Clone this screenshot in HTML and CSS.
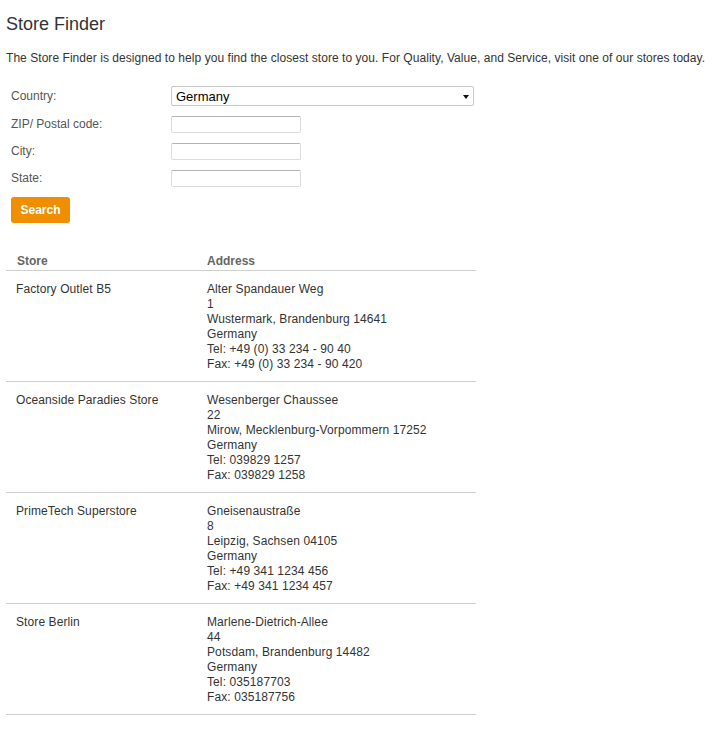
FILE: index.html
```html
<!DOCTYPE html>
<html lang="en">
<head>
<meta charset="utf-8">
<title>Store Finder</title>
<link rel="stylesheet" href="styles.css">
</head>
<body>
<div class="page">
  <h1 class="title">Store Finder</h1>
  <p class="intro">The Store Finder is designed to help you find the closest store to you. For Quality, Value, and Service, visit one of our stores today.</p>

  <form class="finder">
    <div class="row">
      <label class="label">Country:</label>
      <div class="select-wrap">
        <select class="select"><option>Germany</option></select>
      </div>
    </div>
    <div class="row">
      <label class="label">ZIP/ Postal code:</label>
      <input class="input" type="text">
    </div>
    <div class="row">
      <label class="label">City:</label>
      <input class="input" type="text">
    </div>
    <div class="row">
      <label class="label">State:</label>
      <input class="input" type="text">
    </div>
    <div class="actions">
      <button type="button" class="btn">Search</button>
    </div>
  </form>

  <table class="stores">
    <thead>
      <tr><th class="col-store">Store</th><th>Address</th></tr>
    </thead>
    <tbody>
      <tr>
        <td>Factory Outlet B5</td>
        <td>Alter Spandauer Weg<br>1<br>Wustermark, Brandenburg 14641<br>Germany<br>Tel: +49 (0) 33 234 - 90 40<br>Fax: +49 (0) 33 234 - 90 420</td>
      </tr>
      <tr>
        <td>Oceanside Paradies Store</td>
        <td>Wesenberger Chaussee<br>22<br>Mirow, Mecklenburg-Vorpommern 17252<br>Germany<br>Tel: 039829 1257<br>Fax: 039829 1258</td>
      </tr>
      <tr>
        <td>PrimeTech Superstore</td>
        <td>Gneisenaustraße<br>8<br>Leipzig, Sachsen 04105<br>Germany<br>Tel: +49 341 1234 456<br>Fax: +49 341 1234 457</td>
      </tr>
      <tr>
        <td>Store Berlin</td>
        <td>Marlene-Dietrich-Allee<br>44<br>Potsdam, Brandenburg 14482<br>Germany<br>Tel: 035187703<br>Fax: 035187756</td>
      </tr>
    </tbody>
  </table>
</div>
</body>
</html>
```

FILE: styles.css
```css
html, body {
  margin: 0;
  padding: 0;
  background: #fff;
}

body {
  font-family: "Liberation Sans", Arial, sans-serif;
  font-size: 12px;
  color: #333;
}

.page {
  padding: 13px 0 0 6px;
}

.title {
  margin: 0;
  font-size: 18px;
  line-height: 22px;
  font-weight: normal;
  color: #333;
}

.intro {
  margin: 16px 0 0;
  line-height: 15px;
  color: #333;
  white-space: nowrap;
  letter-spacing: 0.05px;
}

.finder {
  margin: 20px 0 0 5px;
  display: flex;
  flex-direction: column;
  gap: 10px;
}

.row {
  display: flex;
  align-items: center;
}

.label {
  width: 160px;
  color: #555;
  line-height: 15px;
}

.select-wrap {
  position: relative;
  width: 303px;
  height: 20px;
}

.select-wrap::after {
  content: "";
  position: absolute;
  right: 5px;
  top: 9px;
  border-left: 3px solid transparent;
  border-right: 3px solid transparent;
  border-top: 4px solid #111;
  pointer-events: none;
}

.select {
  appearance: none;
  -webkit-appearance: none;
  box-sizing: border-box;
  width: 100%;
  height: 20px;
  margin: 0;
  padding: 0 0 0 4px;
  border: 1px solid #c8c8c8;
  border-radius: 2px;
  background: #fff;
  font-family: "Liberation Sans", Arial, sans-serif;
  font-size: 13px;
  color: #000;
}

.input {
  box-sizing: border-box;
  width: 130px;
  height: 17px;
  margin: 0;
  padding: 0 3px;
  border: 1px solid #dcdcdc;
  border-top-color: #b4b4b4;
  border-radius: 2px;
  background: #fff;
  font-family: "Liberation Sans", Arial, sans-serif;
  font-size: 12px;
}

.actions {
  display: flex;
}

.btn {
  width: 59px;
  height: 26px;
  margin: 0;
  padding: 0;
  border: none;
  border-radius: 3px;
  background: #ef8f00;
  color: #fff;
  font-family: "Liberation Sans", Arial, sans-serif;
  font-size: 12px;
  font-weight: bold;
  cursor: pointer;
}

.stores {
  margin-top: 31px;
  width: 470px;
  border-collapse: collapse;
}

.stores th {
  text-align: left;
  font-weight: bold;
  color: #666;
  line-height: 15px;
  padding: 0 10px 1px 11px;
  border-bottom: 1px solid #cfcfcf;
}

.stores th.col-store {
  width: 170px;
}

.stores td {
  vertical-align: top;
  line-height: 15px;
  padding: 11px 10px 9px 10px;
  border-bottom: 1px solid #cfcfcf;
  color: #333;
  letter-spacing: 0.1px;
}

.stores th + th {
  padding-left: 10px;
}
```
